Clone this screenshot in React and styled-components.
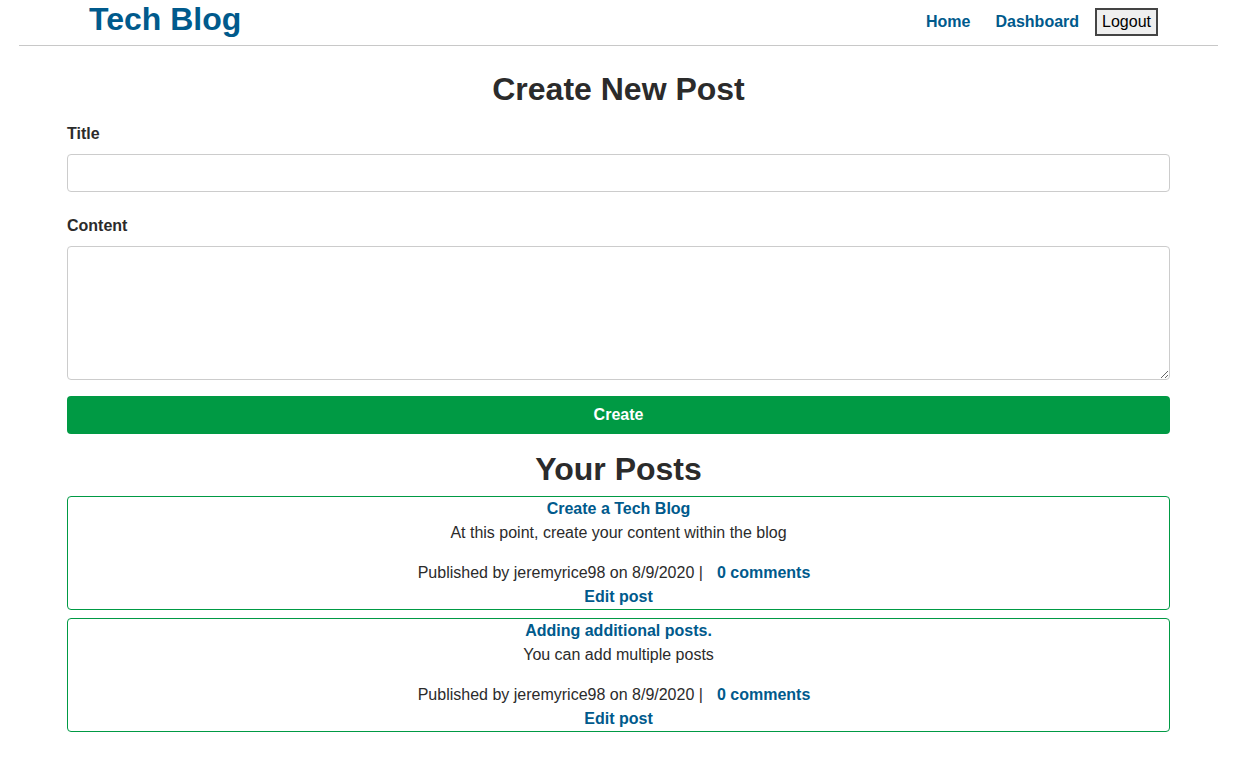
import React from "react";
import styled, { createGlobalStyle } from "styled-components";

const GlobalStyle = createGlobalStyle`
  body {
    margin: 0;
    background: #fff;
    font-family: "Liberation Sans", Arial, sans-serif;
    color: #2b2b2b;
  }
`;

const Page = styled.div`
  padding: 0 29px 40px 19px;
`;

const Header = styled.header`
  display: flex;
  align-items: center;
  justify-content: space-between;
  height: 45px;
  padding: 0 60px 0 70px;
  border-bottom: 1px solid #c8c8c8;
`;

const Brand = styled.a`
  font-size: 32px;
  font-weight: bold;
  color: #005a8c;
  text-decoration: none;
  line-height: 36px;
  margin-top: -8px;
`;

const Nav = styled.nav`
  display: flex;
  align-items: center;
  margin-top: -1px;
`;

const NavLink = styled.a`
  font-size: 16px;
  font-weight: bold;
  color: #005a8c;
  text-decoration: none;
  margin-left: 25px;
`;

const LogoutButton = styled.button`
  font-family: "Liberation Sans", Arial, sans-serif;
  font-size: 16px;
  color: #000;
  background: #efefef;
  border: 2px solid #444;
  padding: 2px 5px;
  margin-left: 16px;
  height: 28px;
`;

const Main = styled.main`
  padding: 0 48px;
`;

const Heading = styled.h2`
  margin: ${(p) => (p.$first ? "24px 0 0" : "0")};
  font-size: 32px;
  line-height: 38px;
  text-align: center;
  color: #2b2b2b;
`;

const Form = styled.form`
  margin-top: 14px;
`;

const FormGroup = styled.div`
  margin-bottom: 22px;
  &:last-of-type {
    margin-bottom: 16px;
  }
`;

const Label = styled.label`
  display: block;
  font-size: 16px;
  font-weight: bold;
  line-height: 24px;
  margin-bottom: 8px;
`;

const Input = styled.input`
  display: block;
  width: 100%;
  box-sizing: border-box;
  height: 38px;
  border: 1px solid #ccc;
  border-radius: 4px;
  font-size: 16px;
  padding: 6px 10px;
`;

const TextArea = styled.textarea`
  display: block;
  width: 100%;
  box-sizing: border-box;
  height: 134px;
  border: 1px solid #ccc;
  border-radius: 4px;
  font-size: 16px;
  padding: 6px 10px;
  font-family: "Liberation Sans", Arial, sans-serif;
`;

const CreateButton = styled.button`
  display: block;
  width: 100%;
  height: 38px;
  border: none;
  border-radius: 4px;
  background: #009a44;
  color: #fff;
  font-family: "Liberation Sans", Arial, sans-serif;
  font-size: 16px;
  font-weight: bold;
  margin-bottom: 16px;
`;

const PostList = styled.div`
  display: flex;
  flex-direction: column;
  gap: 8px;
  margin-top: 8px;
`;

const Card = styled.article`
  border: 1px solid #009a44;
  border-radius: 4px;
  text-align: center;
  font-size: 16px;
  line-height: 24px;
`;

const PostTitle = styled.a`
  display: block;
  font-weight: bold;
  color: #005a8c;
  text-decoration: none;
`;

const PostBody = styled.p`
  margin: 0 0 16px;
`;

const Meta = styled.div``;

const CommentLink = styled.a`
  font-weight: bold;
  color: #005a8c;
  text-decoration: none;
  margin: 0 9px 0 14px;
`;

const EditLink = styled.a`
  display: block;
  font-weight: bold;
  color: #005a8c;
  text-decoration: none;
`;

const posts = [
  {
    title: "Create a Tech Blog",
    body: "At this point, create your content within the blog",
    author: "jeremyrice98",
    date: "8/9/2020",
  },
  {
    title: "Adding additional posts.",
    body: "You can add multiple posts",
    author: "jeremyrice98",
    date: "8/9/2020",
  },
];

function App() {
  return (
    <>
      <GlobalStyle />
      <Page>
        <Header>
          <Brand href="#">Tech Blog</Brand>
          <Nav>
            <NavLink href="#">Home</NavLink>
            <NavLink href="#">Dashboard</NavLink>
            <LogoutButton>Logout</LogoutButton>
          </Nav>
        </Header>
        <Main>
          <Heading $first>Create New Post</Heading>
          <Form onSubmit={(e) => e.preventDefault()}>
            <FormGroup>
              <Label htmlFor="title">Title</Label>
              <Input id="title" type="text" />
            </FormGroup>
            <FormGroup>
              <Label htmlFor="content">Content</Label>
              <TextArea id="content" />
            </FormGroup>
            <CreateButton type="submit">Create</CreateButton>
          </Form>
          <Heading>Your Posts</Heading>
          <PostList>
            {posts.map((post, i) => (
              <Card key={i}>
                <PostTitle href="#">{post.title}</PostTitle>
                <PostBody>{post.body}</PostBody>
                <Meta>
                  Published by {post.author} on {post.date} |
                  <CommentLink href="#">0 comments</CommentLink>
                </Meta>
                <EditLink href="#">Edit post</EditLink>
              </Card>
            ))}
          </PostList>
        </Main>
      </Page>
    </>
  );
}

export default App;
